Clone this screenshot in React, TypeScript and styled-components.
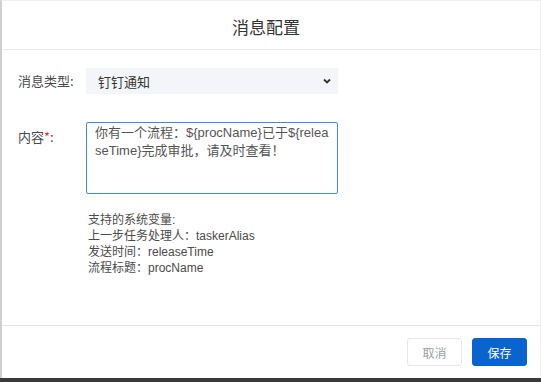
import React from "react";
import styled, { createGlobalStyle } from "styled-components";

const Global = createGlobalStyle`
  html, body { margin: 0; padding: 0; background: #fff; }
  body { font-family: "Liberation Sans", "Noto Sans CJK SC", sans-serif; }
  * { box-sizing: border-box; }
`;

const Page = styled.div`
  width: 541px;
  height: 382px;
  display: flex;
  flex-direction: column;
  background: #fff;
`;

const Dialog = styled.div`
  flex: 1;
  display: flex;
  flex-direction: column;
  border-left: 2px solid #cfcfcf;
  border-right: 1px solid #ececec;
  border-top: 1px solid #eeeeee;
  padding-top: 1px;
`;

const Header = styled.div`
  height: 48px;
  display: flex;
  align-items: center;
  justify-content: center;
  border-bottom: 1px solid #e8e8ef;
  font-size: 17px;
  color: #333;
  padding-right: 10px;
  padding-top: 1px;
  font-family: "Noto Sans CJK SC", sans-serif;
`;

const Body = styled.div`
  flex: 1;
  padding: 18px 0 0 16px;
  display: flex;
  flex-direction: column;
  border-bottom: 1px solid #e4e4e4;
`;

const Row = styled.div<{ $mt?: number }>`
  display: flex;
  align-items: flex-start;
  margin-top: ${(p) => p.$mt ?? 0}px;
`;

const Label = styled.div<{ $pt?: number }>`
  width: 68px;
  font-size: 13px;
  color: #4a4a4a;
  padding-top: ${(p) => p.$pt ?? 0}px;
  line-height: 18px;
  font-family: "Noto Sans CJK SC", sans-serif;
`;

const Star = styled.span`
  color: #e0342b;
`;

const Select = styled.div`
  width: 252px;
  height: 26px;
  background: #f4f5f8;
  display: flex;
  align-items: center;
  justify-content: space-between;
  padding: 0 6px 0 12px;
  font-size: 13px;
  color: #333;
  font-family: "Noto Sans CJK SC", sans-serif;
`;

const TextArea = styled.div`
  width: 252px;
  height: 72px;
  border: 1px solid #3b8be6;
  border-radius: 2px;
  padding: 1px 8px;
  font-size: 13px;
  line-height: 18px;
  color: #555;
  word-break: break-all;
`;

const Hints = styled.div`
  margin: 18px 0 0 70px;
  font-size: 12px;
  line-height: 16px;
  color: #4a4a4a;
`;

const Footer = styled.div`
  height: 52px;
  display: flex;
  align-items: center;
  justify-content: flex-end;
  gap: 10px;
  padding-right: 13px;
`;

const Button = styled.button<{ $primary?: boolean }>`
  width: 55px;
  height: 28px;
  border-radius: 3px;
  font-size: 12px;
  font-family: "Noto Sans CJK SC", sans-serif;
  border: 1px solid ${(p) => (p.$primary ? "#0a64d0" : "#e3e6ea")};
  background: ${(p) => (p.$primary ? "#0a64d0" : "#fff")};
  color: ${(p) => (p.$primary ? "#fff" : "#9aa0a6")};
  padding: 0;
`;

const BottomBar = styled.div`
  height: 4px;
  background: #3a3a3a;
`;

export default function App() {
  return (
    <>
      <Global />
      <Page>
        <Dialog>
          <Header>消息配置</Header>
          <Body>
            <Row>
              <Label $pt={4}>消息类型:</Label>
              <Select>
                <span>钉钉通知</span>
                <svg width="10" height="10" viewBox="0 0 10 10">
                  <path d="M2 3.5 L5 6.5 L8 3.5" fill="none" stroke="#333" strokeWidth="1.8" />
                </svg>
              </Select>
            </Row>
            <Row $mt={28}>
              <Label $pt={6}>
                内容<Star>*</Star>:
              </Label>
              <TextArea>
                你有一个流程：${"{procName}"}已于${"{releaseTime}"}完成审批，请及时查看！
              </TextArea>
            </Row>
            <Hints>
              <div>支持的系统变量:</div>
              <div>上一步任务处理人：taskerAlias</div>
              <div>发送时间：releaseTime</div>
              <div>流程标题：procName</div>
            </Hints>
          </Body>
          <Footer>
            <Button>取消</Button>
            <Button $primary>保存</Button>
          </Footer>
        </Dialog>
        <BottomBar />
      </Page>
    </>
  );
}
